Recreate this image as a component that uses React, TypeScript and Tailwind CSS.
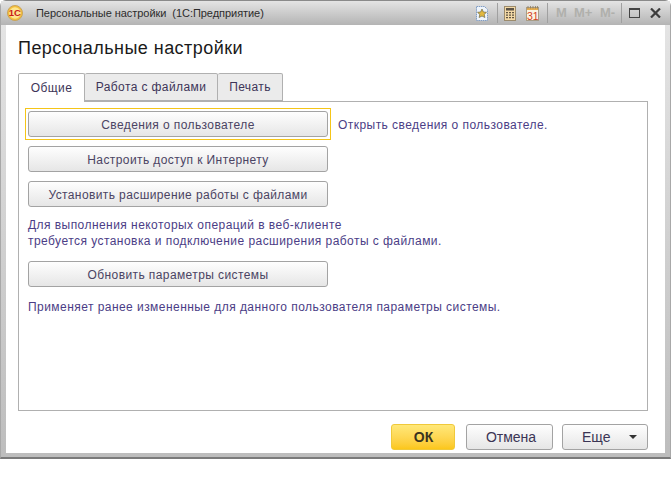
const font = { fontFamily: '"Liberation Sans", Arial, sans-serif' };

const Logo = () => (
  <svg width="16" height="16" viewBox="0 0 16 16">
    <circle cx="8" cy="8" r="7.5" fill="#f4bf3a" stroke="#c9a35a" />
    <circle cx="8" cy="8" r="5.8" fill="#fde58e" />
    <text x="1.8" y="11.2" fontSize="9.5" fontWeight="700" fill="#c9201a" fontFamily="Liberation Sans">1C</text>
  </svg>
);

const Star = () => (
  <svg width="12" height="15" viewBox="0 0 12 15">
    <path d="M.5.5h8l3 3v11H.5z" fill="#eef4fb" stroke="#7f9cc4" strokeDasharray="1.5 .7" />
    <path d="M6 3l1.4 3 3.1.3-2.3 2.1.7 3.1L6 10l-2.9 1.5.7-3.1-2.3-2.1 3.1-.3z" fill="#e2b83e" stroke="#6f6a4a" strokeWidth=".7" />
  </svg>
);

const Calc = () => (
  <svg width="12" height="15" viewBox="0 0 12 15">
    <rect x=".5" y=".5" width="11" height="14" fill="#f3d9a6" stroke="#9c8b6c" />
    <rect x="2" y="2" width="8" height="2.5" fill="#5c5346" />
    <path d="M2 6h2v1.3H2zM5 6h2v1.3H5zM8 6h2v1.3H8zM2 8.5h2v1.3H2zM5 8.5h2v1.3H5zM8 8.5h2v1.3H8zM2 11h2v1.3H2zM5 11h2v1.3H5zM8 11h2v1.3H8z" fill="#5f5443" />
  </svg>
);

const Calendar = () => (
  <svg width="13" height="15" viewBox="0 0 13 15">
    <rect x=".5" y="1.5" width="12" height="13" fill="#fbf3e2" stroke="#a89c86" />
    <rect x="1" y="2" width="11" height="2" fill="#e5ad4f" />
    <path d="M2 0v2.5M4.5 0v2.5M7 0v2.5M9.5 0v2.5M11.5 0v2.5" stroke="#8b7a5c" strokeWidth=".8" />
    <text x="1" y="13.5" fontSize="10.5" fill="#d2401c" fontFamily="Liberation Sans">31</text>
  </svg>
);

const Sep = () => <div className="w-px h-[20px] bg-[#a0a0a0]" />;

const FormButton = ({ label }: { label: string }) => (
  <button className="w-[300px] h-[26px] pt-[1px] rounded-[3px] border border-[#a3a3a3] bg-gradient-to-b from-[#fefefe] to-[#e6e6e6] text-[12px] tracking-[0.4px] text-[#4b4463]">
    {label}
  </button>
);

const Hint = ({ children }: { children: React.ReactNode }) => (
  <p className="text-[12px] leading-[16px] tracking-[0.45px] text-[#4b3d86]">{children}</p>
);

export default function App() {
  return (
    <div className="w-[671px] h-[485px] bg-white" style={font}>
      <div className="w-[671px] h-[459px] flex flex-col rounded-t-[6px] border-x border-t border-b-2 border-x-[#a8a8a8] border-t-[#8a8a8a] border-b-[#7a7a7a] bg-gradient-to-b from-[#e6e6e6] to-[#bdbdbd]">
        {/* title bar */}
        <div className="h-[24px] shrink-0 flex items-center pl-[6px] bg-gradient-to-b from-[#e4e4e4] to-[#b4b4b4]">
          <Logo />
          <span className="ml-[13px] text-[11px] tracking-[-0.05px] text-[#2c2c2c] whitespace-pre">Персональные настройки  (1С:Предприятие)</span>
          <div className="ml-auto flex items-center">
            <Star />
            <div className="ml-[9px]"><Sep /></div>
            <div className="ml-[6px]"><Calc /></div>
            <div className="ml-[10px]"><Calendar /></div>
            <div className="ml-[8px]"><Sep /></div>
            <span className="ml-[8px] w-[11px] text-[13px] font-bold text-[#b0b0ac] whitespace-nowrap">M</span>
            <span className="ml-[7px] w-[18px] text-[13px] font-bold text-[#b0b0ac] whitespace-nowrap">M+</span>
            <span className="ml-[8px] w-[15px] text-[13px] font-bold text-[#b0b0ac] whitespace-nowrap">M-</span>
            <div className="ml-[6px]"><Sep /></div>
            <div className="ml-[7px] w-[11px] h-[10px] border border-[#444] border-t-2" />
            <svg className="ml-[10px] mr-[9px]" width="11" height="10" viewBox="0 0 11 10">
              <path d="M1 .5l9 9M10 .5l-9 9" stroke="#3c3c3c" strokeWidth="2.2" />
            </svg>
          </div>
        </div>

        {/* form body */}
        <div className="flex-1 flex flex-col ml-[5px] mr-[5px] mb-[4px] bg-white pl-[12px] pr-[17px]">
          <h1 className="mt-[12px] h-[22px] text-[18px] leading-[22px] tracking-[0.45px] text-[#1a1a1a]">Персональные настройки</h1>

          <div className="mt-[14px] flex h-[28px] relative z-10 text-[12px] tracking-[0.4px] text-[#3d3558]">
            <div className="w-[67px] h-[29px] pb-[1px] flex items-center justify-center rounded-t-[2px] border border-b-0 border-[#b0b0b0] bg-white">Общие</div>
            <div className="w-[133px] flex items-center justify-center rounded-t-[2px] border border-l-0 border-[#b0b0b0] bg-[#ebebeb]">Работа с файлами</div>
            <div className="w-[65px] flex items-center justify-center rounded-t-[2px] border border-l-0 border-[#b0b0b0] bg-[#ebebeb]">Печать</div>
          </div>

          <div className="h-[310px] border border-[#b0b0b0] px-[6px] pt-[6px]">
            <div className="flex items-center">
              <div className="border border-[#f5c518] px-[2px] py-[2px] flex">
                <FormButton label="Сведения о пользователе" />
              </div>
              <div className="ml-[7px] pt-[1px]">
                <Hint>Открыть сведения о пользователе.</Hint>
              </div>
            </div>
            <div className="mt-[6px] ml-[3px]"><FormButton label="Настроить доступ к Интернету" /></div>
            <div className="mt-[9px] ml-[3px]"><FormButton label="Установить расширение работы с файлами" /></div>
            <div className="mt-[10px] ml-[3px]">
              <Hint>Для выполнения некоторых операций в веб-клиенте<br />требуется установка и подключение расширения работы с файлами.</Hint>
            </div>
            <div className="mt-[12px] ml-[3px]"><FormButton label="Обновить параметры системы" /></div>
            <div className="mt-[12px] ml-[3px]">
              <Hint>Применяет ранее измененные для данного пользователя параметры системы.</Hint>
            </div>
          </div>

          {/* footer */}
          <div className="mt-[13px] flex justify-end text-[14px] text-[#3b3555]">
            <button className="w-[64px] h-[26px] pl-[1px] rounded-[3px] border border-[#f0c93a] bg-gradient-to-b from-[#ffe878] to-[#fcc718] font-bold text-[#3a3420]">ОК</button>
            <button className="ml-[11px] w-[87px] h-[26px] pl-[3px] rounded-[3px] border border-[#a3a3a3] bg-gradient-to-b from-[#fefefe] to-[#e6e6e6]">Отмена</button>
            <button className="ml-[9px] w-[86px] h-[26px] rounded-[3px] border border-[#a3a3a3] bg-gradient-to-b from-[#fefefe] to-[#e6e6e6] flex items-center pl-[19px]">
              Еще
              <svg className="ml-auto mr-[10px]" width="8" height="4" viewBox="0 0 8 4"><path d="M0 0h8L4 4z" fill="#333" /></svg>
            </button>
          </div>
        </div>
      </div>
    </div>
  );
}
